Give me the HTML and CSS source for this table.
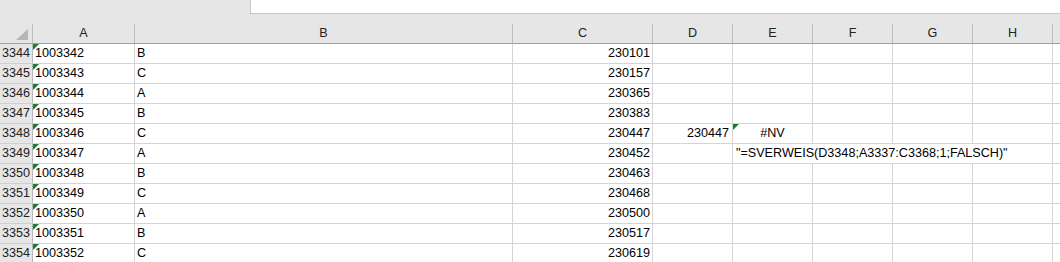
FILE: index.html
```html
<!DOCTYPE html>
<html lang="de">
<head>
<meta charset="utf-8">
<title>Tabelle</title>
<link rel="stylesheet" href="styles.css">
</head>
<body>
<div class="topbar">
  <div class="namebox"></div>
  <div class="formulabar"></div>
</div>
<div class="sheet">
  <div class="row head">
    <div class="c corner"><svg width="12" height="11" viewBox="0 0 12 11"><polygon points="12,0 12,11 0,11" fill="#b5b5b5"/></svg></div>
    <div class="c">A</div><div class="c">B</div><div class="c">C</div><div class="c">D</div><div class="c">E</div><div class="c">F</div><div class="c">G</div><div class="c">H</div><div class="c last"></div>
  </div>
  <div class="row"><div class="c rh">3344</div><div class="c num tri">1003342</div><div class="c">B</div><div class="c r">230101</div><div class="c"></div><div class="c"></div><div class="c"></div><div class="c"></div><div class="c"></div><div class="c last"></div></div>
  <div class="row"><div class="c rh">3345</div><div class="c num tri">1003343</div><div class="c">C</div><div class="c r">230157</div><div class="c"></div><div class="c"></div><div class="c"></div><div class="c"></div><div class="c"></div><div class="c last"></div></div>
  <div class="row"><div class="c rh">3346</div><div class="c num tri">1003344</div><div class="c">A</div><div class="c r">230365</div><div class="c"></div><div class="c"></div><div class="c"></div><div class="c"></div><div class="c"></div><div class="c last"></div></div>
  <div class="row"><div class="c rh">3347</div><div class="c num tri">1003345</div><div class="c">B</div><div class="c r">230383</div><div class="c"></div><div class="c"></div><div class="c"></div><div class="c"></div><div class="c"></div><div class="c last"></div></div>
  <div class="row"><div class="c rh">3348</div><div class="c num tri">1003346</div><div class="c">C</div><div class="c r">230447</div><div class="c r d">230447</div><div class="c ctr tri">#NV</div><div class="c"></div><div class="c"></div><div class="c"></div><div class="c last"></div></div>
  <div class="row"><div class="c rh">3349</div><div class="c num tri">1003347</div><div class="c">A</div><div class="c r">230452</div><div class="c"></div><div class="c span4 txt">"=SVERWEIS(D3348;A3337:C3368;1;FALSCH)"</div><div class="c last"></div></div>
  <div class="row"><div class="c rh">3350</div><div class="c num tri">1003348</div><div class="c">B</div><div class="c r">230463</div><div class="c"></div><div class="c"></div><div class="c"></div><div class="c"></div><div class="c"></div><div class="c last"></div></div>
  <div class="row"><div class="c rh">3351</div><div class="c num tri">1003349</div><div class="c">C</div><div class="c r">230468</div><div class="c"></div><div class="c"></div><div class="c"></div><div class="c"></div><div class="c"></div><div class="c last"></div></div>
  <div class="row"><div class="c rh">3352</div><div class="c num tri">1003350</div><div class="c">A</div><div class="c r">230500</div><div class="c"></div><div class="c"></div><div class="c"></div><div class="c"></div><div class="c"></div><div class="c last"></div></div>
  <div class="row"><div class="c rh">3353</div><div class="c num tri">1003351</div><div class="c">B</div><div class="c r">230517</div><div class="c"></div><div class="c"></div><div class="c"></div><div class="c"></div><div class="c"></div><div class="c last"></div></div>
  <div class="row"><div class="c rh">3354</div><div class="c num tri">1003352</div><div class="c">C</div><div class="c r">230619</div><div class="c"></div><div class="c"></div><div class="c"></div><div class="c"></div><div class="c"></div><div class="c last"></div></div>
</div>
</body>
</html>
```
FILE: styles.css
```css
html, body {
  margin: 0;
  padding: 0;
  background: #e6e6e6;
  overflow: hidden;
}
body {
  font-family: "Liberation Sans", Arial, sans-serif;
  font-size: 12.6px;
  color: #000;
}
.topbar {
  display: flex;
  height: 14px;
}
.namebox {
  width: 250px;
}
.formulabar {
  flex: 1;
  background: #fff;
  border-left: 1px solid #c6c6c6;
  border-bottom: 1px solid #c6c6c6;
}
.sheet {
  margin-top: 10px;
}
.row {
  display: grid;
  grid-template-columns: 33px 102px 378px 140px 80px 80px 80px 80px 80px 1fr;
  height: 20px;
}
.c {
  box-sizing: border-box;
  height: 20px;
  line-height: 19px;
  padding: 0 2px;
  background: #fff;
  border-right: 1px solid #d4d4d4;
  border-bottom: 1px solid #d4d4d4;
  white-space: nowrap;
  overflow: hidden;
  position: relative;
}
.c.last {
  border-right: none;
}
.head .c {
  background: #e6e6e6;
  text-align: center;
  color: #222;
  border-right-color: #bdbdbd;
  border-bottom: 1px solid #9f9f9f;
}
.head .c.corner {
  display: flex;
  align-items: flex-end;
  justify-content: flex-end;
  padding: 0 4px 3px 0;
}
.head .c.last {
  border-right: none;
}
.c.rh {
  background: #e6e6e6;
  text-align: center;
  color: #222;
  padding: 0;
  border-right-color: #b8b8b8;
  border-bottom-color: #cfcfcf;
}
.c.r {
  text-align: right;
}
.c.d {
  padding-right: 3px;
}
.c.ctr {
  text-align: center;
}
.c.txt {
  padding-left: 3px;
}
.c.span4 {
  grid-column: span 4;
}
.c.tri::before {
  content: "";
  position: absolute;
  left: 0;
  top: 0;
  width: 0;
  height: 0;
  border-top: 6px solid #1a7d2c;
  border-right: 6px solid transparent;
}
```
